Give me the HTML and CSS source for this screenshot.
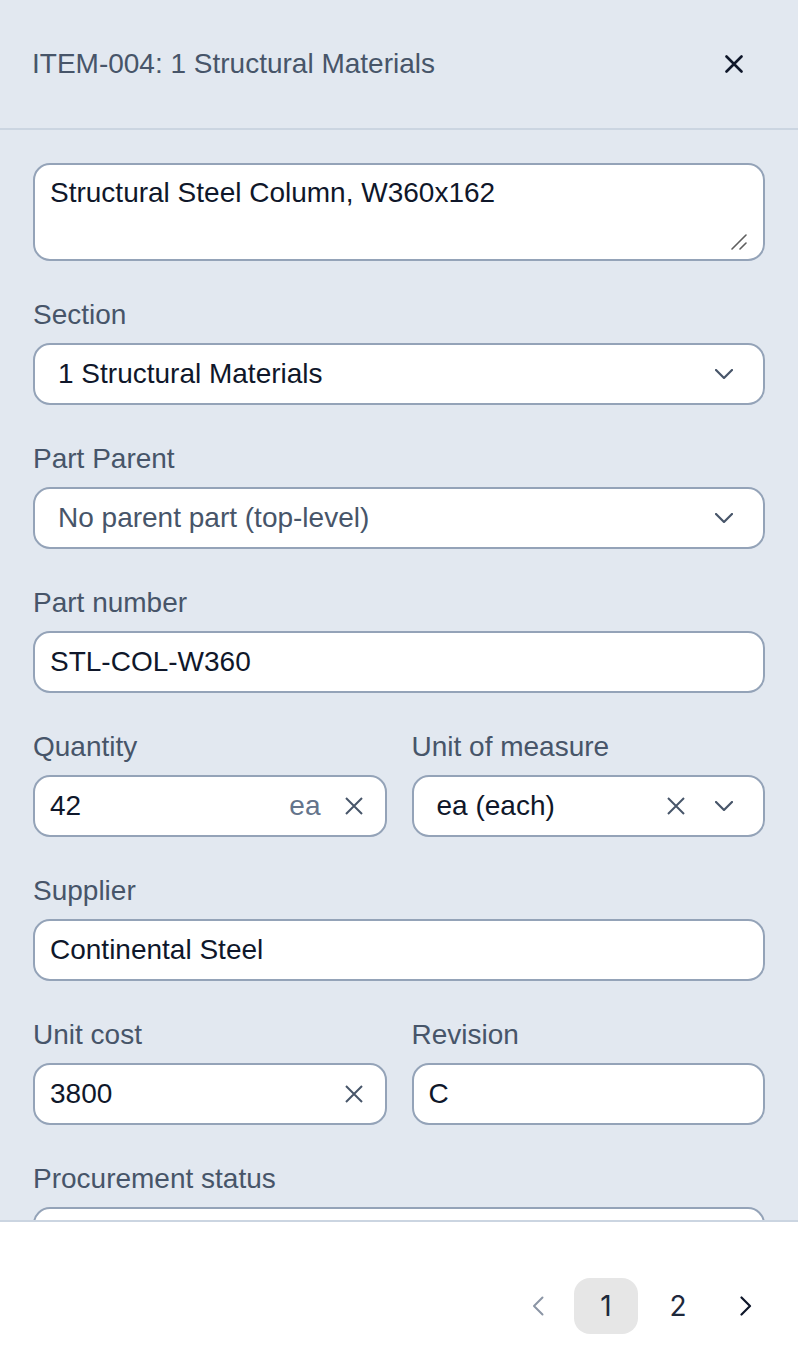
FILE: index.html
```html
<!DOCTYPE html>
<html lang="en">
<head>
<meta charset="utf-8">
<title>ITEM-004</title>
<link rel="stylesheet" href="styles.css">
</head>
<body>
<div class="panel">
  <header class="hdr">
    <h1 class="title">ITEM-004: 1 Structural Materials</h1>
    <button class="close" type="button" aria-label="Close">
      <svg width="18" height="18" viewBox="0 0 18 18"><path d="M1.5 1.5L16.5 16.5M16.5 1.5L1.5 16.5" stroke="#0f172a" stroke-width="2.6" stroke-linecap="round" fill="none"/></svg>
    </button>
  </header>

  <main class="content">
    <div class="desc-wrap">
      <textarea class="desc">Structural Steel Column, W360x162</textarea>
      <svg class="grip" width="16" height="16" viewBox="0 0 16 16"><path d="M1 15L15 1M9 15L15 9" stroke="#5f5f5f" stroke-width="1.6" stroke-linecap="round" fill="none"/></svg>
    </div>

    <div class="field">
      <label class="lbl">Section</label>
      <div class="box select">
        <span class="val">1 Structural Materials</span>
        <svg class="chev" width="18" height="10" viewBox="0 0 18 10"><path d="M1 1L9 9L17 1" stroke="#475569" stroke-width="2.2" stroke-linecap="round" stroke-linejoin="round" fill="none"/></svg>
      </div>
    </div>

    <div class="field">
      <label class="lbl">Part Parent</label>
      <div class="box select">
        <span class="val muted">No parent part (top-level)</span>
        <svg class="chev" width="18" height="10" viewBox="0 0 18 10"><path d="M1 1L9 9L17 1" stroke="#475569" stroke-width="2.2" stroke-linecap="round" stroke-linejoin="round" fill="none"/></svg>
      </div>
    </div>

    <div class="field">
      <label class="lbl">Part number</label>
      <div class="box"><input class="inp" type="text" value="STL-COL-W360"></div>
    </div>

    <div class="row">
      <div class="field">
        <label class="lbl">Quantity</label>
        <div class="box">
          <input class="inp" type="text" value="42">
          <span class="suffix">ea</span>
          <svg class="clr" width="18" height="18" viewBox="0 0 18 18"><path d="M1 1L17 17M17 1L1 17" stroke="#475569" stroke-width="2" fill="none"/></svg>
        </div>
      </div>
      <div class="field">
        <label class="lbl">Unit of measure</label>
        <div class="box select">
          <span class="val">ea (each)</span>
          <svg class="clr clr-sel" width="18" height="18" viewBox="0 0 18 18"><path d="M1 1L17 17M17 1L1 17" stroke="#475569" stroke-width="2" fill="none"/></svg>
          <svg class="chev" width="18" height="10" viewBox="0 0 18 10"><path d="M1 1L9 9L17 1" stroke="#475569" stroke-width="2.2" stroke-linecap="round" stroke-linejoin="round" fill="none"/></svg>
        </div>
      </div>
    </div>

    <div class="field">
      <label class="lbl">Supplier</label>
      <div class="box"><input class="inp" type="text" value="Continental Steel"></div>
    </div>

    <div class="row">
      <div class="field">
        <label class="lbl">Unit cost</label>
        <div class="box">
          <input class="inp" type="text" value="3800">
          <svg class="clr" width="18" height="18" viewBox="0 0 18 18"><path d="M1 1L17 17M17 1L1 17" stroke="#475569" stroke-width="2" fill="none"/></svg>
        </div>
      </div>
      <div class="field">
        <label class="lbl">Revision</label>
        <div class="box"><input class="inp" type="text" value="C"></div>
      </div>
    </div>

    <div class="field">
      <label class="lbl">Procurement status</label>
      <div class="box select"></div>
    </div>
  </main>

  <footer class="foot">
    <nav class="pager" aria-label="Pagination">
      <button class="pg nav" type="button" aria-label="Previous page">
        <svg width="12" height="20" viewBox="0 0 12 20"><path d="M10.5 1.5L2 10L10.5 18.5" stroke="#8b95a5" stroke-width="2" stroke-linecap="round" stroke-linejoin="round" fill="none"/></svg>
      </button>
      <button class="pg active" type="button">1</button>
      <button class="pg" type="button">2</button>
      <button class="pg nav" type="button" aria-label="Next page">
        <svg width="12" height="20" viewBox="0 0 12 20"><path d="M1.5 1.5L10 10L1.5 18.5" stroke="#0f172a" stroke-width="2.2" stroke-linecap="round" stroke-linejoin="round" fill="none"/></svg>
      </button>
    </nav>
  </footer>
</div>
</body>
</html>
```

FILE: styles.css
```css
* { box-sizing: border-box; }

html, body {
  margin: 0;
  padding: 0;
}

body {
  font-family: "Liberation Sans", Arial, sans-serif;
  background: #e2e8f0;
  color: #0f172a;
}

.panel {
  height: 100vh;
  display: flex;
  flex-direction: column;
  overflow: hidden;
}

.hdr {
  flex: 0 0 auto;
  height: 130px;
  border-bottom: 2px solid #cbd5e1;
  display: flex;
  align-items: center;
  justify-content: space-between;
  padding: 0 40px 0 32px;
}

.title {
  margin: 0;
  font-size: 28px;
  line-height: 32px;
  font-weight: 400;
  color: #475569;
}

.close {
  width: 48px;
  height: 48px;
  border: 0;
  background: transparent;
  padding: 0;
  display: flex;
  align-items: center;
  justify-content: center;
}

.content {
  flex: 1 1 auto;
  min-height: 0;
  overflow: hidden;
  padding: 33px 33px 0;
  display: flex;
  flex-direction: column;
  gap: 38px;
}

.desc-wrap {
  position: relative;
  flex: 0 0 auto;
}

.desc {
  display: block;
  width: 100%;
  height: 98px;
  border: 2px solid #94a3b8;
  border-radius: 17px;
  background: #fff;
  padding: 12px 15px;
  font-family: "Liberation Sans", Arial, sans-serif;
  font-size: 28px;
  line-height: 32px;
  color: #0f172a;
  resize: none;
  outline: none;
}

.grip {
  position: absolute;
  right: 18px;
  bottom: 11px;
  display: block;
}

.field {
  display: flex;
  flex-direction: column;
  gap: 12px;
  min-width: 0;
}

.lbl {
  font-size: 28px;
  line-height: 32px;
  color: #475569;
}

.row {
  display: grid;
  grid-template-columns: 1fr 1fr;
  column-gap: 25px;
}

.box {
  height: 62px;
  flex: 0 0 auto;
  border: 2px solid #94a3b8;
  border-radius: 17px;
  background: #fff;
  display: flex;
  align-items: center;
  padding: 0 22px 0 15px;
}

.box.select {
  padding: 0 30px 0 23px;
}

.inp {
  flex: 1 1 auto;
  min-width: 0;
  border: 0;
  outline: none;
  background: transparent;
  padding: 0;
  font-family: "Liberation Sans", Arial, sans-serif;
  font-size: 28px;
  color: #0f172a;
}

.val {
  flex: 1 1 auto;
  min-width: 0;
  font-size: 28px;
  color: #0f172a;
  white-space: nowrap;
}

.val.muted {
  color: #475569;
}

.suffix {
  font-size: 28px;
  color: #64748b;
  margin-right: 24px;
}

.clr, .chev {
  flex: 0 0 auto;
  display: block;
}

.clr-sel {
  margin-right: 30px;
}

.foot {
  flex: 0 0 auto;
  height: 138px;
  background: #fff;
  border-top: 2px solid #cbd5e1;
  display: flex;
  justify-content: flex-end;
  align-items: flex-start;
  padding: 56px 24px 0;
}

.pager {
  display: flex;
  gap: 8px;
}

.pg {
  width: 64px;
  height: 56px;
  border: 0;
  border-radius: 16px;
  background: transparent;
  padding: 0;
  font-family: Inter, "Liberation Sans", sans-serif;
  font-size: 28px;
  color: #1e293b;
  display: flex;
  align-items: center;
  justify-content: center;
}

.pg.nav {
  width: 56px;
}

.pg.active {
  background: #e6e6e6;
}
```
